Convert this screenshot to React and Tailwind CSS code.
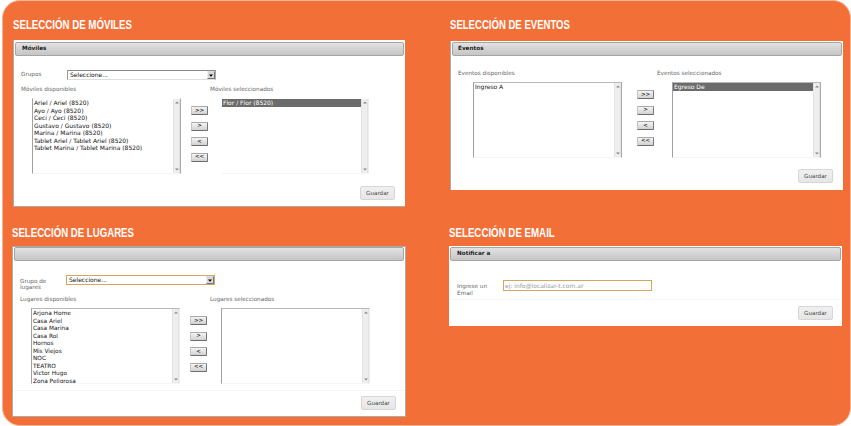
import React from "react";

function Title({ children, className }) {
  return (
    <h2 className="h-[16px] whitespace-nowrap font-['Liberation_Sans',Arial,sans-serif] text-[12.5px] font-bold leading-[16px] text-white">
      <span className={`inline-block origin-left ${className}`}>{children}</span>
    </h2>
  );
}

function Panel({ title, className, bar = "pl-[6px]", children }) {
  return (
    <section className={`flex flex-col border-[#b0aaa6] bg-white ${className}`}>
      <header
        className={`flex h-[14px] shrink-0 items-center rounded-[2px] border border-[#a5a5a5] bg-linear-to-b from-[#e2e2e2] to-[#c5c5c5] text-[5.7px] font-bold leading-none text-[#222] ${bar}`}
      >
        {title}
      </header>
      {children}
    </section>
  );
}

function Arrow({ up }) {
  return (
    <svg viewBox="0 0 4 3" className="h-[3px] w-[4px]">
      <path d={up ? "M0 2.5 2 .5 4 2.5Z" : "M0 .5 2 2.5 4 .5Z"} fill="#888" />
    </svg>
  );
}

function ListBox({
  items = [],
  selected,
  font = "text-[6px]",
  className = "w-[149px] border-l-[#a0a0a0] border-r-[#a8a8a8] border-t-[#b8b8b8]",
}) {
  return (
    <div className={`flex h-[76px] shrink-0 border border-b-[#f5f5f5] bg-white ${className}`}>
      <ul className={`min-w-0 flex-1 overflow-hidden leading-[8px] text-[#111] ${font}`}>
        {items.map((item) => (
          <li
            key={item}
            className={`h-[7.5px] whitespace-nowrap pl-px ${selected ? "bg-[#6b6b6b] leading-[7.5px] text-white" : ""}`}
          >
            {item}
          </li>
        ))}
      </ul>
      <div className="flex w-[7px] flex-col items-center justify-between border-x border-[#e3e3e3] bg-[#eeeeee] py-[2px]">
        <Arrow up />
        <Arrow />
      </div>
    </div>
  );
}

function MoveButtons({ className }) {
  return (
    <div className={`flex w-[17px] shrink-0 flex-col gap-[6.5px] ${className}`}>
      {[">>", ">", "<", "<<"].map((label) => (
        <button
          key={label}
          className="flex h-[9px] w-[17px] items-center justify-center rounded-[1px] border border-b-[#6d6d6d] border-l-[#c4c4c4] border-r-[#777] border-t-[#a9a9a9] bg-linear-to-b from-[#f4f4f4] to-[#d2d2d2] text-[5.5px] leading-none text-black"
        >
          {label}
        </button>
      ))}
    </div>
  );
}

function Select({ className }) {
  return (
    <div
      className={`flex w-[149px] shrink-0 items-center justify-between border bg-white pl-[2px] text-[6px] leading-none text-[#111] ${className}`}
    >
      <span>Seleccione...</span>
      <span className="flex h-full w-[8px] items-center justify-center border border-b-[#777] border-l-[#eee] border-r-[#777] border-t-[#ddd] bg-[#d8d8d8]">
        <svg viewBox="0 0 4 3" className="h-[3px] w-[4px]">
          <path d="M0 .5H4L2 2.7Z" fill="#000" />
        </svg>
      </span>
    </div>
  );
}

function Save({ className }) {
  return (
    <button
      className={`flex h-[14px] w-[35px] shrink-0 items-center justify-center self-end rounded-[2px] border border-[#d6d6d6] bg-linear-to-b from-[#f0f0f0] to-[#e6e6e6] pt-px text-[5.6px] leading-none text-[#444] ${className}`}
    >
      Guardar
    </button>
  );
}

function Labels({ left, right, className, split = "w-[189px]" }) {
  return (
    <div className={`flex h-[8px] shrink-0 text-[5.7px] leading-[8px] text-[#666] ${className}`}>
      <span className={`shrink-0 ${split}`}>{left}</span>
      <span>{right}</span>
    </div>
  );
}

const moviles = [
  "Ariel / Ariel (8520)",
  "Ayo / Ayo (8520)",
  "Ceci / Ceci (8520)",
  "Gustavo / Gustavo (8520)",
  "Marina / Marina (8520)",
  "Tablet Ariel / Tablet Ariel (8520)",
  "Tablet Marina / Tablet Marina (8520)",
];

const lugares = [
  "Arjona Home",
  "Casa Ariel",
  "Casa Marina",
  "Casa Rol",
  "Hornos",
  "Mis Viejos",
  "NOC",
  "TEATRO",
  "Victor Hugo",
  "Zona Peligrosa",
];

export default function App() {
  return (
    <div className="h-[426px] w-[851px] overflow-hidden bg-white pl-[2px] font-['DejaVu_Sans',Verdana,sans-serif]">
      <main className="flex h-[426px] w-[849px] rounded-[18px] border border-[#f9b497] bg-[#f36f38]">
        <div className="flex w-[437px] shrink-0 flex-col pl-[9px] pt-[16px]">
          <div className="pl-px">
            <Title className="scale-x-[0.775]">SELECCIÓN DE MÓVILES</Title>
            <Panel title="Móviles" className="mt-[7px] h-[167px] w-[392px] border-b border-l px-px pt-[2px]">
              <div className="mt-[14px] flex h-[10px] items-center pl-[6px] text-[5.7px] leading-none text-[#666]">
                <span className="w-[46px] shrink-0">Grupos</span>
                <Select className="h-[10px] border-b-[#ddd] border-l-[#999] border-r-[#aaa] border-t-[#888]" />
              </div>
              <Labels left="Móviles disponibles" right="Móviles seleccionados" className="mt-[5px] pl-[6px]" />
              <div className="mt-[5px] flex pl-[17px]">
                <ListBox items={moviles} className="w-[149px] border-l-[#a0a0a0] border-r-[#a8a8a8] border-t-white" />
                <MoveButtons className="ml-[10px] mt-[8px]" />
                <div className="ml-[13px]">
                  <ListBox items={["Flor / Flor (8520)"]} selected className="w-[148px] border-l-white border-r-[#eee] border-t-white" />
                </div>
              </div>
              <Save className="mr-[9px] mt-[12px]" />
            </Panel>
          </div>
          <div className="mt-[18px]">
            <Title className="scale-x-[0.77]">SELECCIÓN DE LUGARES</Title>
            <Panel className="mt-[5px] h-[171px] w-[394px] border px-px">
              <div className="mt-[14px] flex h-[18px] items-start pl-[6px] text-[5.7px] leading-[6.5px] text-[#666]">
                <span className="w-[46px] shrink-0 pt-[2.5px]">
                  Grupo de
                  <br />
                  lugares
                </span>
                <Select className="h-[10px] border-[#d3a85c]" />
              </div>
              <Labels left="Lugares disponibles" right="Lugares seleccionados" className="mt-[2px] pl-[6px]" split="w-[190px]" />
              <div className="mt-[5px] flex pl-[17px]">
                <ListBox items={lugares} font="text-[5.8px]" className="w-[149px] border-l-[#a0a0a0] border-r-[#eee] border-t-[#b8b8b8]" />
                <MoveButtons className="ml-[10px] mt-[8px]" />
                <div className="ml-[14px]">
                  <ListBox className="w-[149px] border-l-[#a0a0a0] border-r-[#eee] border-t-[#b8b8b8]" />
                </div>
              </div>
              <div className="mt-[6px] border-t border-[#f6f6f6]" />
              <Save className="mr-[8px] mt-[5px]" />
            </Panel>
          </div>
        </div>
        <div className="flex flex-col pl-[9px] pt-[16px]">
          <div className="pl-px">
            <Title className="scale-x-[0.765]">SELECCIÓN DE EVENTOS</Title>
            <Panel title="Eventos" bar="pb-px pl-[5px]" className="mt-[8px] h-[149px] w-[393px] border-l px-px pt-px">
              <Labels left="Eventos disponibles" right="Eventos seleccionados" className="mt-[13px] pl-[6px]" split="w-[199px]" />
              <div className="mt-[5px] flex pl-[21px]">
                <ListBox items={["Ingreso A"]} />
                <MoveButtons className="ml-[15px] mt-[8px]" />
                <div className="ml-[18px]">
                  <ListBox items={["Egreso De"]} selected />
                </div>
              </div>
              <Save className="mr-[9px] mt-[11px]" />
            </Panel>
          </div>
          <div className="mt-[35px]">
            <Title className="scale-x-[0.777]">SELECCIÓN DE EMAIL</Title>
            <Panel title="Notificar a" className="mt-[5px] h-[80px] w-[393px] px-px pt-px">
              <div className="mt-[19px] flex h-[19px] items-start pl-[7px] text-[5.7px] leading-[6.5px] text-[#666]">
                <span className="w-[46px] shrink-0 whitespace-nowrap pt-[3px]">
                  Ingrese un
                  <br />
                  Email
                </span>
                <input
                  className="h-[11px] w-[149px] border border-[#d3a85c] bg-white px-px text-[6px] placeholder:text-[#999]"
                  placeholder="ej: info@localizar-t.com.ar"
                />
              </div>
              <div className="border-t border-[#f6f6f6]" />
              <Save className="mr-[8px] mt-[6px]" />
            </Panel>
          </div>
        </div>
      </main>
    </div>
  );
}
